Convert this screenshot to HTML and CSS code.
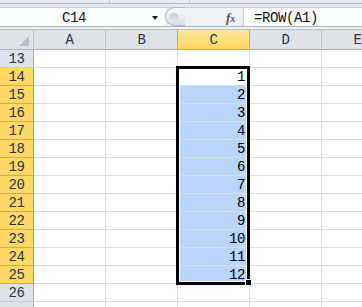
FILE: index.html
```html
<!DOCTYPE html>
<html>
<head>
<meta charset="utf-8">
<link rel="stylesheet" href="styles.css">
</head>
<body>
<div class="ribbon"><span class="rseg rseg1"></span><span class="rseg rseg2"></span><span class="rseg rseg3"></span></div>
<div class="fbar">
  <div class="namebox"><span class="nametext">C14</span><span class="arrow"></span></div>
  <div class="fxzone">
    <div class="grip"><span class="gripdot"></span></div>
    <span class="fx">f<span class="fxsub">x</span></span>
  </div>
  <div class="input">=ROW(A1)</div>
</div>
<div class="fsep"></div>
<div class="sheet">
  <div class="grid">
    <div class="corner"><span class="tri"></span></div>
    <div class="ch">A</div>
    <div class="ch">B</div>
    <div class="ch chl">C</div>
    <div class="ch">D</div>
    <div class="ch">E</div>

    <div class="rh">13</div><div class="c"></div><div class="c"></div><div class="c"></div><div class="c"></div><div class="c"></div>
    <div class="rh rhl">14</div><div class="c"></div><div class="c"></div><div class="c num">1</div><div class="c"></div><div class="c"></div>
    <div class="rh rhl">15</div><div class="c"></div><div class="c"></div><div class="c num sel">2</div><div class="c"></div><div class="c"></div>
    <div class="rh rhl">16</div><div class="c"></div><div class="c"></div><div class="c num sel">3</div><div class="c"></div><div class="c"></div>
    <div class="rh rhl">17</div><div class="c"></div><div class="c"></div><div class="c num sel">4</div><div class="c"></div><div class="c"></div>
    <div class="rh rhl">18</div><div class="c"></div><div class="c"></div><div class="c num sel">5</div><div class="c"></div><div class="c"></div>
    <div class="rh rhl">19</div><div class="c"></div><div class="c"></div><div class="c num sel">6</div><div class="c"></div><div class="c"></div>
    <div class="rh rhl">20</div><div class="c"></div><div class="c"></div><div class="c num sel">7</div><div class="c"></div><div class="c"></div>
    <div class="rh rhl">21</div><div class="c"></div><div class="c"></div><div class="c num sel">8</div><div class="c"></div><div class="c"></div>
    <div class="rh rhl">22</div><div class="c"></div><div class="c"></div><div class="c num sel">9</div><div class="c"></div><div class="c"></div>
    <div class="rh rhl">23</div><div class="c"></div><div class="c"></div><div class="c num sel">10</div><div class="c"></div><div class="c"></div>
    <div class="rh rhl">24</div><div class="c"></div><div class="c"></div><div class="c num sel">11</div><div class="c"></div><div class="c"></div>
    <div class="rh rhl">25</div><div class="c"></div><div class="c"></div><div class="c num sel">12</div><div class="c"></div><div class="c"></div>
    <div class="rh">26</div><div class="c"></div><div class="c"></div><div class="c"></div><div class="c"></div><div class="c"></div>
    <div class="rh"></div><div class="c"></div><div class="c"></div><div class="c"></div><div class="c"></div><div class="c"></div>
  </div>
  <div class="selbox"></div>
  <div class="handle"></div>
</div>
</body>
</html>
```
FILE: styles.css
```css
html, body {
  margin: 0;
  padding: 0;
  width: 362px;
  height: 307px;
  overflow: hidden;
  background: #fff;
  font-family: "Liberation Mono", "DejaVu Sans Mono", monospace;
}

.ribbon {
  height: 3px;
  background: #e8ebef;
  border-bottom: 1px solid #b8c0ca;
  display: flex;
}
.rseg { display: block; height: 3px; border-right: 1px solid #c3c9d1; }
.rseg1 { width: 109px; }
.rseg2 { width: 79px; }
.rseg3 { flex: 1; border-right: 0; }

.fbar {
  height: 22px;
  background: #e4e7eb;
  display: flex;
  align-items: flex-end;
}
.namebox {
  width: 165px;
  height: 19px;
  background: #fff;
  border-top: 1px solid #c9cfd6;
  box-sizing: border-box;
  display: flex;
  align-items: center;
  position: relative;
}
.nametext {
  font-size: 14px;
  letter-spacing: -0.4px;
  color: #111;
  margin-left: 62px;
  margin-top: 2px;
}
.arrow {
  width: 0;
  height: 0;
  border-left: 3.5px solid transparent;
  border-right: 3.5px solid transparent;
  border-top: 4px solid #222;
  margin-left: 66px;
  margin-top: 1px;
}
.fxzone {
  width: 78px;
  height: 19px;
  background: #eef0f3;
  border-top: 1px solid #c9cfd6;
  box-sizing: border-box;
  display: flex;
  align-items: center;
  position: relative;
}
.grip {
  width: 20px;
  height: 19px;
  margin-top: -1px;
  box-sizing: border-box;
  border: 1px solid #b4bbc4;
  border-right: 0;
  border-radius: 10px 0 0 10px;
  background: linear-gradient(#f8f9fa, #d9dde2);
  display: flex;
  align-items: center;
  padding-left: 4px;
}
.gripdot {
  width: 8px;
  height: 8px;
  border-radius: 50%;
  background: linear-gradient(#c6cbd1, #e2e5e9);
}
.fx {
  font-family: "Liberation Serif", serif;
  font-style: italic;
  font-weight: bold;
  font-size: 13px;
  color: #5a5a5a;
  margin-left: 41px;
  margin-top: 1px;
}
.fxsub { font-size: 10px; }
.input {
  flex: 1;
  height: 19px;
  background: #fff;
  border-top: 1px solid #c9cfd6;
  border-left: 1px solid #c5ccd4;
  box-sizing: border-box;
  font-size: 14px;
  letter-spacing: -0.4px;
  color: #111;
  padding-left: 10px;
  line-height: 19px;
  padding-top: 1px;
}

.fsep {
  height: 2px;
  background: #f1f3f5;
  border-top: 1px solid #a9b2bd;
  border-bottom: 1px solid #b6bec8;
}

.sheet { position: relative; overflow: hidden; width: 362px; }
.grid {
  display: grid;
  grid-template-columns: 34px 72px 72px 72px 72px 72px;
  grid-template-rows: 20px;
  grid-auto-rows: 18px;
  font-size: 14px;
  letter-spacing: -0.4px;
}
.grid > div { box-sizing: border-box; }

.corner {
  background: #dfe3e8;
  border-right: 1px solid #bcc3cb;
  border-bottom: 1px solid #a9b2bd;
  position: relative;
}
.tri {
  position: absolute;
  right: 4px;
  bottom: 3px;
  width: 0;
  height: 0;
  border-left: 10px solid transparent;
  border-bottom: 10px solid #b6bdc5;
}
.ch {
  background: #dfe3e8;
  border-right: 1px solid #bcc3cb;
  border-bottom: 1px solid #a9b2bd;
  color: #27344a;
  text-align: center;
  line-height: 21px;
}
.chl {
  background: linear-gradient(#ffe89b, #ffd45d);
  border-bottom: 1px solid #f0a43a;
  border-right: 1px solid #d9a84a;
  border-left: 1px solid #d9a84a;
  margin-left: -1px;
  width: 73px;
}
.rh {
  background: #dfe3e8;
  border-right: 1px solid #a9b2bd;
  border-bottom: 1px solid #c8cdd3;
  color: #27344a;
  text-align: center;
  line-height: 19px;
}
.rhl {
  background: #ffd966;
  border-right: 1px solid #c89a3c;
  border-bottom: 1px solid #daa845;
}
.c {
  border-right: 1px solid #dadcdd;
  border-bottom: 1px solid #dadcdd;
}
.num {
  text-align: right;
  padding-right: 4px;
  line-height: 19px;
  color: #000;
}
.sel { background: #b8d5fb; }

.selbox {
  position: absolute;
  left: 176px;
  top: 36px;
  width: 74px;
  height: 219px;
  box-sizing: border-box;
  border: 3px solid #000;
  box-shadow: inset 0 0 0 1px #fff;
}
.handle {
  position: absolute;
  left: 245px;
  top: 249px;
  width: 7px;
  height: 7px;
  box-sizing: border-box;
  background: #000;
  border: 1px solid #fff;
}
```
